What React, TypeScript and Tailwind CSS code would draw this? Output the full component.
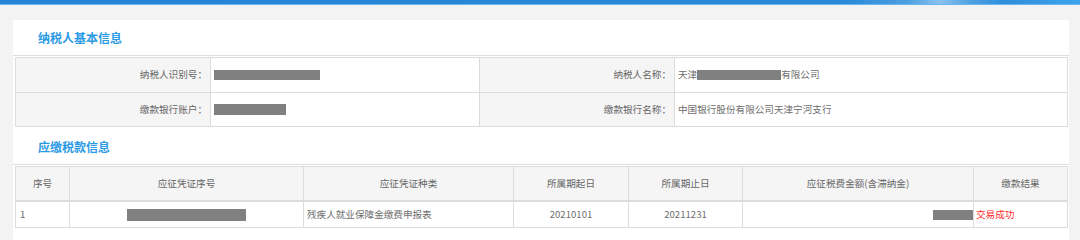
import React from "react";

const font = "font-['Noto_Sans_CJK_SC','Microsoft_YaHei',sans-serif]";

function Redacted({ w, h }: { w: number; h: number }) {
  return <span className="inline-block bg-[#808080] shrink-0" style={{ width: w, height: h }} />;
}

function SectionTitle({ children }: { children: React.ReactNode }) {
  return (
    <div className="h-[36px] flex items-center pl-[25px] border-b border-[#dedede]">
      <span className="text-[12px] font-bold leading-none text-[#2b9ae4]">{children}</span>
    </div>
  );
}

function Label({ children, h }: { children: React.ReactNode; h: string }) {
  return (
    <div className={`${h} bg-[#f5f5f5] border-r border-b border-[#dcdcdc] flex items-center justify-end pr-[3px] text-[9.6px] leading-none text-[#666]`}>
      {children}
    </div>
  );
}

function Value({ children, h }: { children: React.ReactNode; h: string }) {
  return (
    <div className={`${h} bg-white border-r border-b border-[#dcdcdc] flex items-center pl-[3px] text-[9.6px] leading-none text-[#6e6e6e]`}>
      {children}
    </div>
  );
}

const headers = ["序号", "应征凭证序号", "应征凭证种类", "所属期起日", "所属期止日", "应征税费金额(含滞纳金)", "缴款结果"];

export default function App() {
  return (
    <div className={`${font} w-[1080px] h-[240px] overflow-hidden bg-[#f3f3f3] flex flex-col`}>
      {/* header strip */}
      <div className="h-[5px] shrink-0 bg-[linear-gradient(90deg,#2683d5_0%,#2a89d9_78%,#4d9fe0_84%,#8cc3ee_87%,#4d9fe0_90%,#2e8edc_93%,#3fa3ec_100%)] border-b border-[#64b6ef]" />

      <div className="flex-1 pt-[15px] pl-[13px]">
        <div className="w-[1056px] h-full bg-white">
          <SectionTitle>纳税人基本信息</SectionTitle>

          {/* taxpayer info */}
          <div className="mt-[1px] ml-[2px] mb-[2px] w-[1053px] border-l border-t border-[#dcdcdc] grid grid-cols-[195px_269px_195px_393px]">
            <Label h="h-[35px]">纳税人识别号：</Label>
            <Value h="h-[35px]">
              <Redacted w={106} h={10} />
            </Value>
            <Label h="h-[35px]">纳税人名称：</Label>
            <Value h="h-[35px]">
              <span>天津</span>
              <Redacted w={84} h={10} />
              <span>有限公司</span>
            </Value>
            <Label h="h-[34px]">缴款银行账户：</Label>
            <Value h="h-[34px]">
              <Redacted w={72} h={11} />
            </Value>
            <Label h="h-[34px]">缴款银行名称：</Label>
            <Value h="h-[34px]">中国银行股份有限公司天津宁河支行</Value>
          </div>

          <SectionTitle>应缴税款信息</SectionTitle>

          {/* payment records */}
          <div className="mt-[1px] ml-[2px] w-[1053px] border-l border-t border-[#dcdcdc] grid grid-cols-[54px_234px_210px_115px_114px_231px_94px] text-[9.6px] leading-none">
            {headers.map((t) => (
              <div
                key={t}
                className="h-[35px] bg-[#f5f5f5] border-r border-b-2 border-[#dcdcdc] flex items-center justify-center text-[#666]"
              >
                {t}
              </div>
            ))}
            <div className="h-[26px] border-r border-b border-[#dcdcdc] flex items-center pl-[4px] text-[#666]">1</div>
            <div className="h-[26px] border-r border-b border-[#dcdcdc] flex items-center justify-center">
              <Redacted w={119} h={12} />
            </div>
            <div className="h-[26px] border-r border-b border-[#dcdcdc] flex items-center pl-[3px] text-[#6e6e6e]">
              残疾人就业保障金缴费申报表
            </div>
            <div className="h-[26px] border-r border-b border-[#dcdcdc] flex items-center justify-center text-[#6e6e6e]">20210101</div>
            <div className="h-[26px] border-r border-b border-[#dcdcdc] flex items-center justify-center text-[#6e6e6e]">20211231</div>
            <div className="h-[26px] border-r border-b border-[#dcdcdc] flex items-center justify-end">
              <Redacted w={40} h={10} />
            </div>
            <div className="h-[26px] border-r border-b border-[#dcdcdc] flex items-center pl-[2px] text-[#ff2a2a]">交易成功</div>
          </div>
        </div>
      </div>
    </div>
  );
}
